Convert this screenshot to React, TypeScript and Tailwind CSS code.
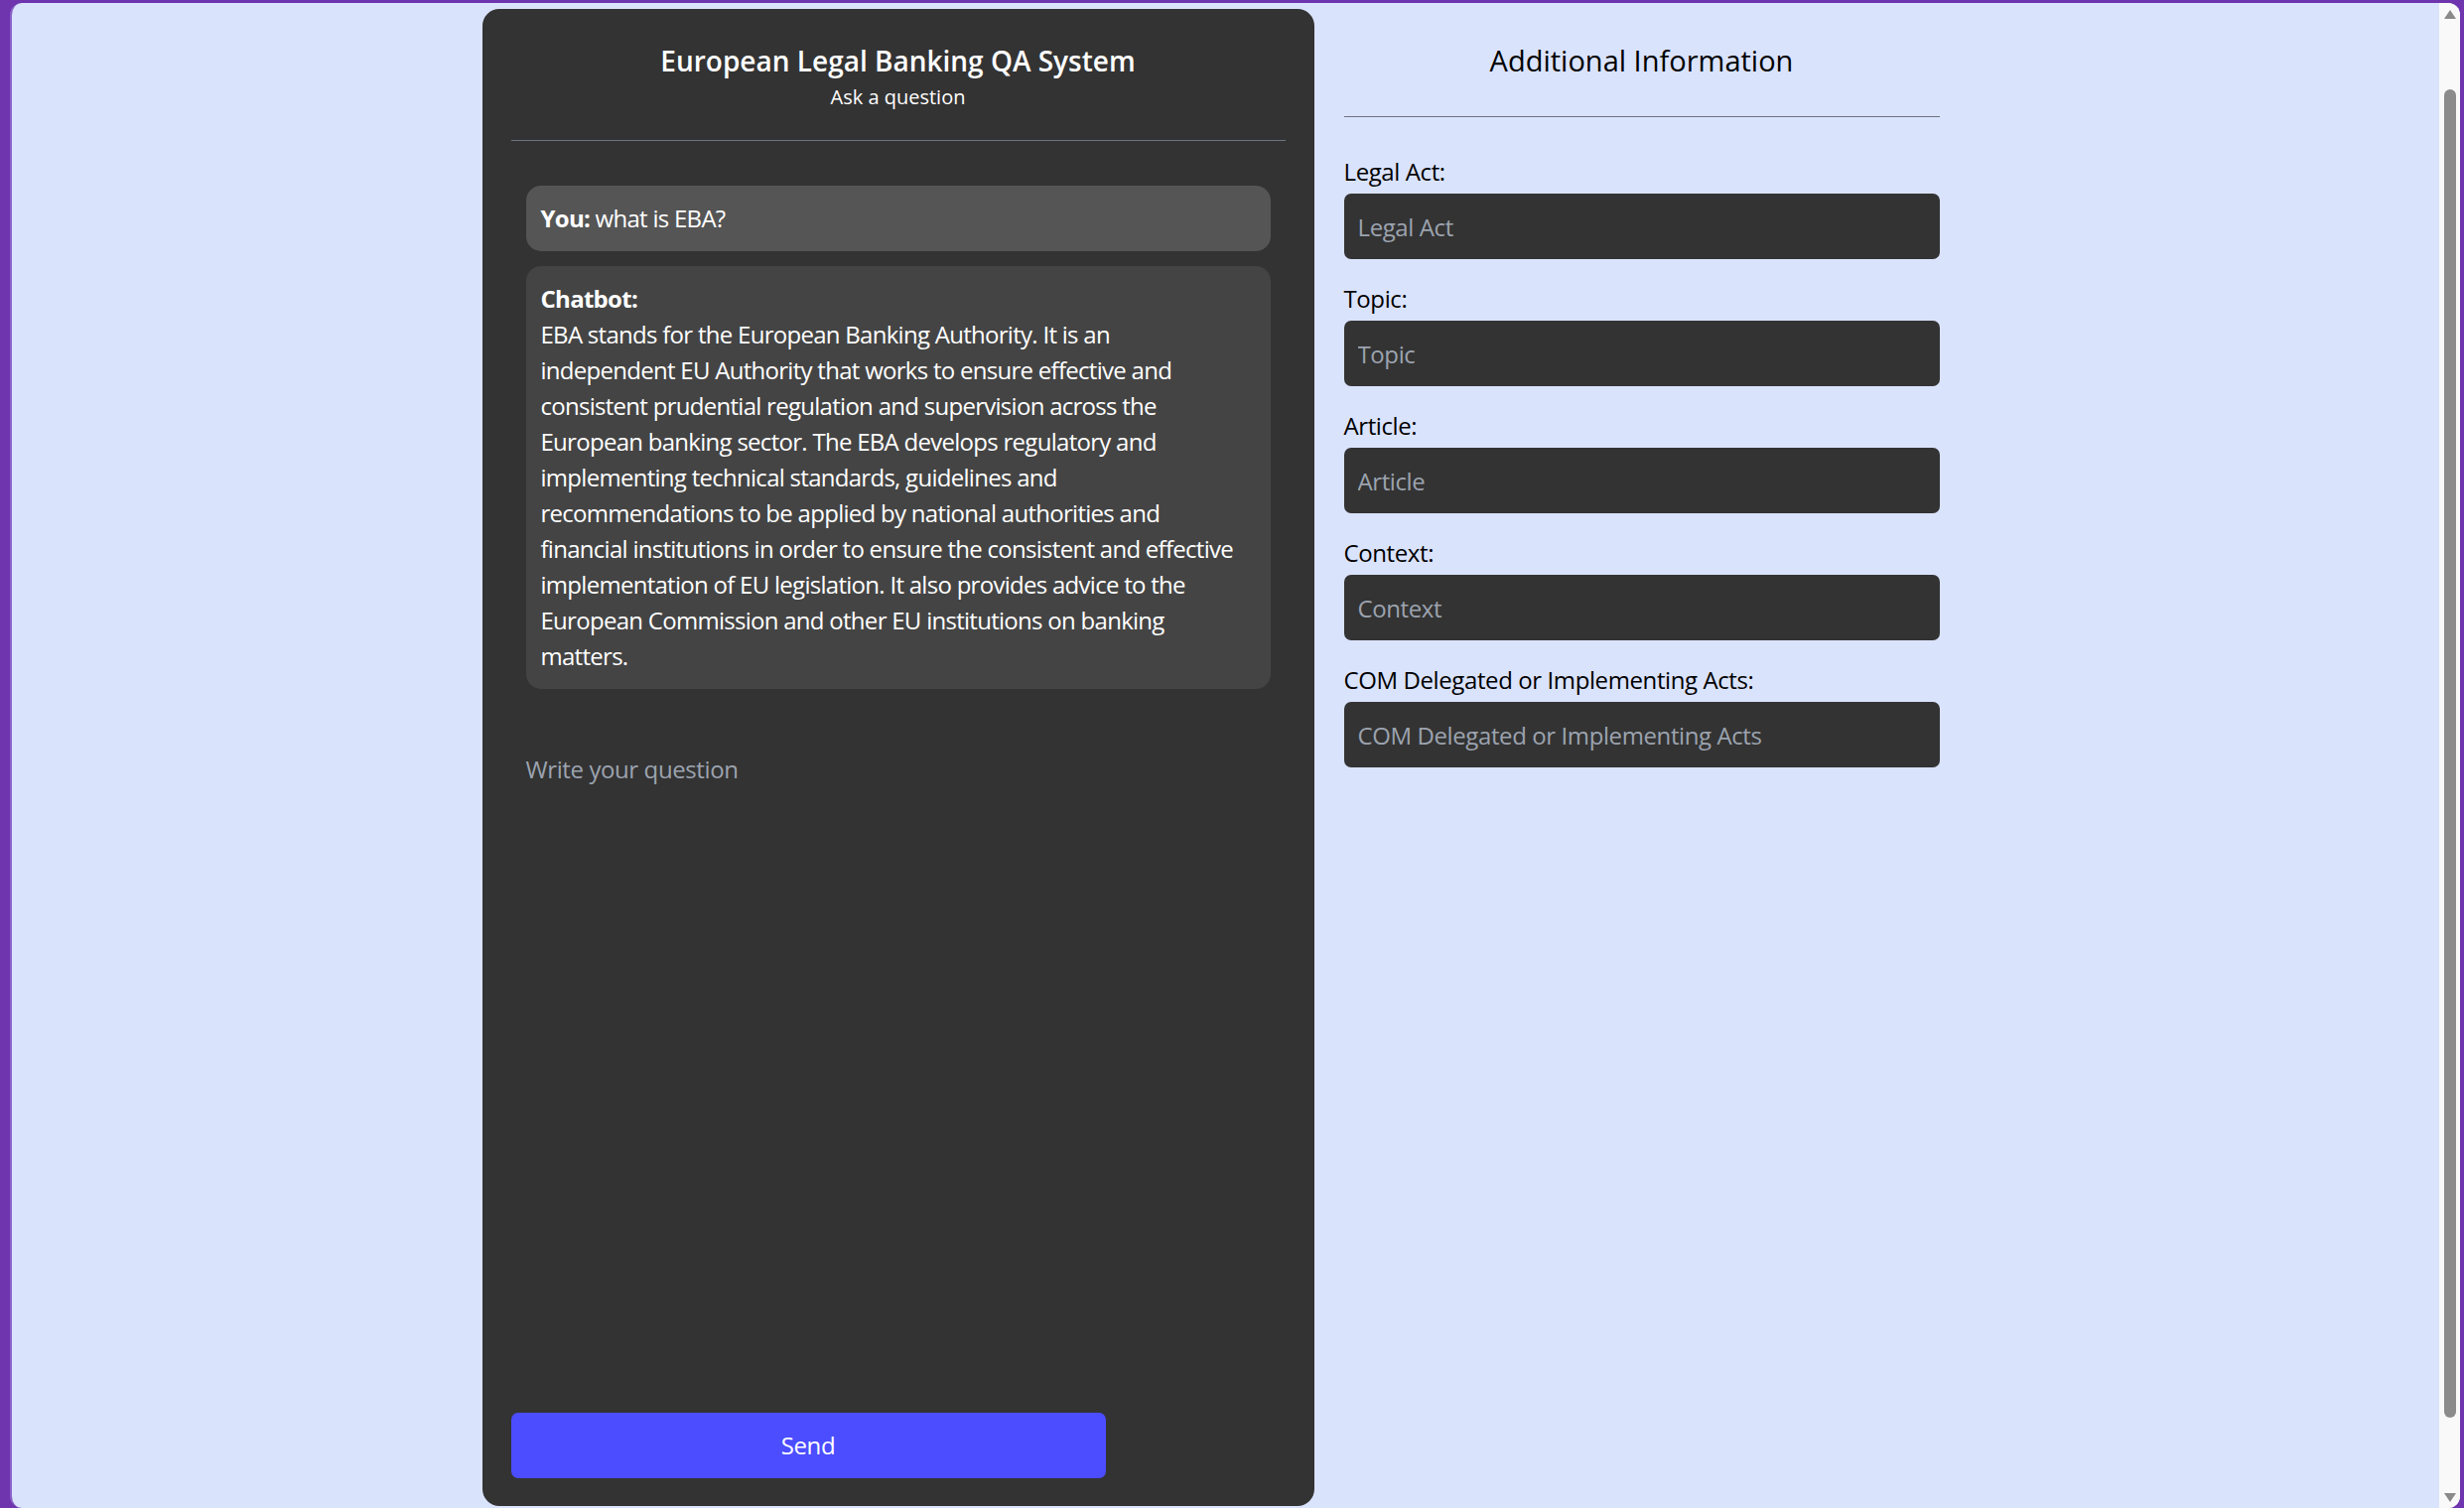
import React from "react";

const answerLines = [
  "EBA stands for the European Banking Authority. It is an",
  "independent EU Authority that works to ensure effective and",
  "consistent prudential regulation and supervision across the",
  "European banking sector. The EBA develops regulatory and",
  "implementing technical standards, guidelines and",
  "recommendations to be applied by national authorities and",
  "financial institutions in order to ensure the consistent and effective",
  "implementation of EU legislation. It also provides advice to the",
  "European Commission and other EU institutions on banking",
  "matters.",
];

const fields = [
  "Legal Act",
  "Topic",
  "Article",
  "Context",
  "COM Delegated or Implementing Acts",
];

export default function App() {
  return (
    <div className="w-[2482px] h-[1519px] bg-[#6e35ae] pt-[3px] pl-[10px] pr-[4px] overflow-hidden font-['Open_Sans',sans-serif] tracking-tight">
      <div className="h-[1516px] flex rounded-[12px] overflow-hidden bg-[#dae3fc] border-l-2 border-[#8b62c9]">
        <main className="flex-1 flex justify-center items-start pt-[6px]">
          <section className="w-[838px] h-[1508px] bg-[#333333] rounded-[17px] flex flex-col px-[29px] pt-[31px] pb-[28px] text-white">
            <h1 className="text-center text-[28px] leading-[42px] font-semibold tracking-normal">
              European Legal Banking QA System
            </h1>
            <p className="text-center text-[20px] leading-[32px] tracking-normal">Ask a question</p>
            <div className="mt-[27px] h-px bg-[#6b7280]" />
            <div className="mt-[45px] px-[15px] flex flex-col gap-[15px] text-[24px] leading-[36px] tracking-[-0.03em]">
              <div className="bg-[#555555] rounded-[15px] p-[15px]">
                <strong className="font-bold">You:</strong> what is EBA?
              </div>
              <div className="bg-[#444444] rounded-[15px] p-[15px]">
                <strong className="font-bold">Chatbot:</strong>
                {answerLines.map((l, i) => (
                  <React.Fragment key={i}>
                    <br />
                    {l}
                  </React.Fragment>
                ))}
              </div>
            </div>
            <textarea
              placeholder="Write your question"
              className="mt-[48px] flex-1 resize-none bg-transparent p-[15px] text-[24px] leading-[36px] text-white placeholder:text-[#9ca3af] outline-none"
            />
            <button className="mt-[30px] w-[599px] h-[66px] shrink-0 rounded-[7px] bg-[#4b4dff] text-[24px] text-white">
              Send
            </button>
          </section>
          <aside className="w-[660px] px-[30px] pt-[30px]">
            <h2 className="text-center text-[29px] leading-[43px] font-medium text-black tracking-normal">
              Additional Information
            </h2>
            <div className="mt-[35px] h-px bg-[#6b7280]" />
            <div className="mt-[37px] flex flex-col gap-[22px]">
              {fields.map((f) => (
                <div key={f}>
                  <label className="block text-[24px] leading-[36px] text-black">{f}:</label>
                  <input
                    placeholder={f}
                    className="mt-[4px] w-full h-[66px] rounded-[7px] bg-[#333333] px-[14px] text-[24px] text-white placeholder:text-[#9ca3af] outline-none"
                  />
                </div>
              ))}
            </div>
          </aside>
        </main>
        <div className="w-[21px] bg-[#f9f9f9] flex flex-col items-center">
          <svg className="mt-[7px]" width="12" height="9" viewBox="0 0 12 9">
            <polygon points="6,0 12,9 0,9" fill="#8a8a8a" />
          </svg>
          <div className="mt-[71px] h-[1338px] w-[12px] rounded-full bg-[#8b8b8b]" />
          <div className="flex-1" />
          <svg className="mb-[6px]" width="12" height="9" viewBox="0 0 12 9">
            <polygon points="0,0 12,0 6,9" fill="#8a8a8a" />
          </svg>
        </div>
      </div>
    </div>
  );
}
